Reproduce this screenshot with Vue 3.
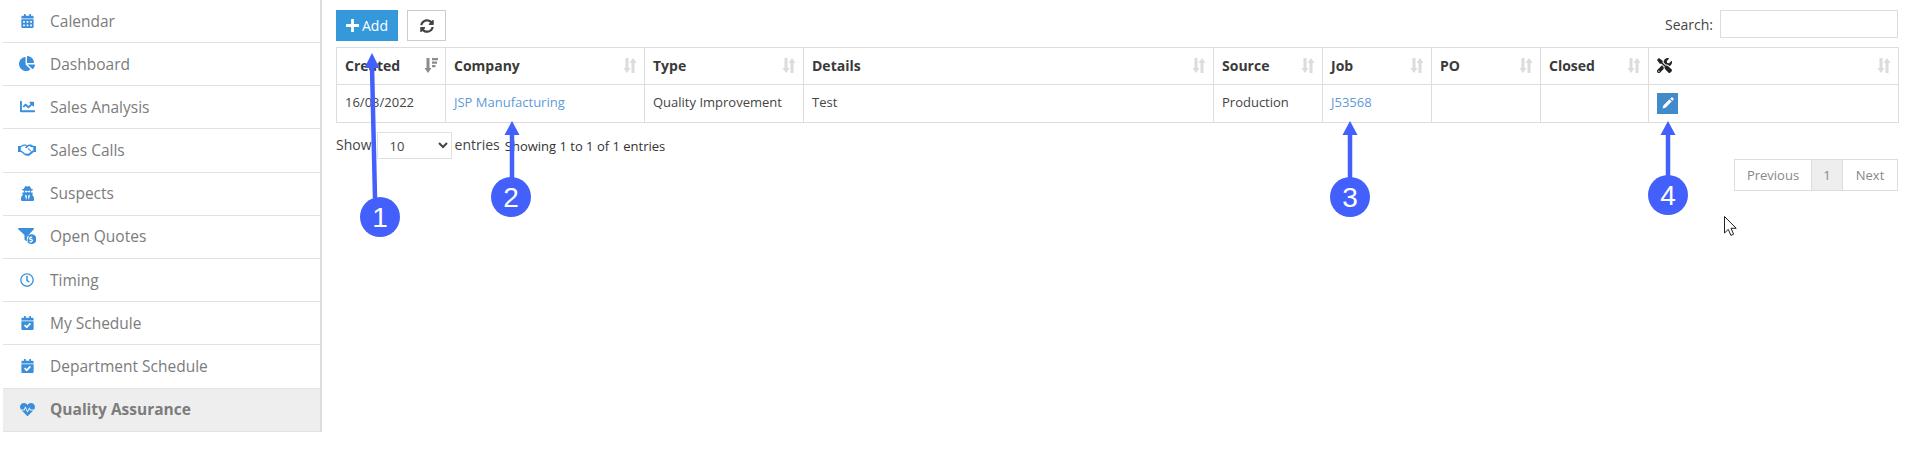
<script setup>
const p = {
  cal: 'M0 464c0 26.500 21.500 48 48 48h352c26.500 0 48-21.500 48-48V192H0v272zm320-196c0-6.600 5.400-12 12-12h40c6.600 0 12 5.400 12 12v40c0 6.600-5.400 12-12 12h-40c-6.600 0-12-5.400-12-12v-40zm0 128c0-6.600 5.400-12 12-12h40c6.600 0 12 5.400 12 12v40c0 6.600-5.400 12-12 12h-40c-6.600 0-12-5.400-12-12v-40zM192 268c0-6.600 5.400-12 12-12h40c6.600 0 12 5.400 12 12v40c0 6.600-5.400 12-12 12h-40c-6.600 0-12-5.400-12-12v-40zm0 128c0-6.600 5.400-12 12-12h40c6.600 0 12 5.400 12 12v40c0 6.600-5.400 12-12 12h-40c-6.600 0-12-5.400-12-12v-40zM64 268c0-6.600 5.400-12 12-12h40c6.600 0 12 5.400 12 12v40c0 6.600-5.400 12-12 12H76c-6.600 0-12-5.400-12-12v-40zm0 128c0-6.600 5.400-12 12-12h40c6.600 0 12 5.400 12 12v40c0 6.600-5.400 12-12 12H76c-6.600 0-12-5.400-12-12v-40zM400 64h-48V16c0-8.800-7.200-16-16-16h-32c-8.800 0-16 7.200-16 16v48H160V16c0-8.800-7.200-16-16-16h-32c-8.800 0-16 7.200-16 16v48H48C21.500 64 0 85.500 0 112v48h448v-48c0-26.500-21.500-48-48-48z',
  pie: 'M527.790 288H290.500l158.030 158.030c6.040 6.040 15.980 6.530 22.190.68 38.700-36.460 65.320-85.610 73.130-140.860 1.340-9.460-6.510-17.850-16.060-17.850zm-15.830-64.800C503.720 103.740 408.260 8.280 288.800.04 279.680-.59 272 7.100 272 16.240V240h223.770c9.140 0 16.820-7.680 16.190-16.800zM224 288V50.710c0-9.550-8.390-17.400-17.840-16.060C86.990 51.490-4.100 155.600.14 280.370 4.500 408.510 114.830 513.590 243.030 511.980c50.400-.63 96.970-16.870 135.260-44.030 7.900-5.600 8.420-17.230 1.570-24.080L224 288z',
  line: 'M496 384H64V80c0-8.840-7.160-16-16-16H16C7.160 64 0 71.160 0 80v336c0 17.670 14.330 32 32 32h464c8.840 0 16-7.160 16-16v-32c0-8.840-7.160-16-16-16zM464 96H345.940c-21.380 0-32.090 25.850-16.970 40.970l32.400 32.400L288 242.750l-73.370-73.370c-12.500-12.500-32.760-12.500-45.250 0l-68.690 68.690c-6.250 6.250-6.250 16.380 0 22.630l22.620 22.620c6.250 6.250 16.380 6.250 22.630 0L192 237.250l73.370 73.370c12.500 12.500 32.760 12.500 45.250 0l96-96 32.400 32.400c15.120 15.120 40.970 4.410 40.970-16.970V112c.01-8.840-7.150-16-15.990-16z',
  secret: 'M383.900 308.300l23.900-62.600c4-10.500-3.700-21.700-15-21.700h-58.500c11-18.900 17.800-40.600 17.800-64v-.3c39.200-7.800 64-19.100 64-31.700 0-13.300-27.300-25.100-70.100-33-9.200-32.800-27-65.800-40.600-82.800-9.500-11.900-25.900-15.600-39.500-8.800l-27.600 13.800c-9 4.500-19.600 4.500-28.600 0L182.100 3.400c-13.600-6.800-30-3.100-39.500 8.800-13.500 17-31.400 50-40.600 82.800-42.700 7.900-70 19.700-70 33 0 12.600 24.800 23.900 64 31.700v.3c0 23.400 6.800 45.100 17.800 64H56.300c-11.500 0-19.200 11.700-14.700 22.300l25.800 60.200C27.300 329.800 0 372.700 0 422.400v44.800C0 491.900 20.100 512 44.800 512h358.400c24.700 0 44.800-20.100 44.800-44.800v-44.800c0-48.400-25.800-90.400-64.100-114.100zM176 480l-41.600-192 49.600 32 24 40-32 120zm96 0l-32-120 24-40 49.600-32L272 480zm41.700-298.500c-3.900 11.900-7 24.600-16.500 33.400-10.100 9.300-48 22.400-64-25-2.800-8.400-15.400-8.400-18.300 0-17 50.200-56 32.400-64 25-9.500-8.800-12.700-21.500-16.500-33.400-.8-2.500-6.300-5.700-6.300-5.800v-10.800c28.300 3.600 61 5.800 96 5.800s67.700-2.200 96-5.800v10.800c-.1.100-5.600 3.200-6.400 5.800z',
  clock: 'M256 8C119 8 8 119 8 256s111 248 248 248 248-111 248-248S393 8 256 8zm0 448c-110.500 0-200-89.500-200-200S145.500 56 256 56s200 89.500 200 200-89.500 200-200 200zm61.800-104.400l-84.900-61.700c-3.100-2.300-4.900-5.900-4.900-9.700V116c0-6.600 5.400-12 12-12h32c6.600 0 12 5.400 12 12v141.700l66.800 48.600c5.400 3.900 6.500 11.400 2.600 16.800L334.600 349c-3.900 5.300-11.400 6.500-16.800 2.600z',
  check: 'M436 160H12c-6.600 0-12-5.400-12-12v-36c0-26.500 21.500-48 48-48h48V12c0-6.600 5.400-12 12-12h40c6.600 0 12 5.400 12 12v52h128V12c0-6.600 5.400-12 12-12h40c6.600 0 12 5.400 12 12v52h48c26.500 0 48 21.500 48 48v36c0 6.600-5.400 12-12 12zM12 192h424c6.600 0 12 5.400 12 12v260c0 26.500-21.500 48-48 48H48c-26.500 0-48-21.500-48-48V204c0-6.600 5.400-12 12-12zm333.300 95.900l-28.200-28.400c-4.700-4.700-12.300-4.700-17-.1L194.500 364.200l-45.900-46.300c-4.700-4.700-12.300-4.700-17-.1l-28.400 28.200c-4.700 4.700-4.700 12.300-.1 17l82.600 83.300c4.700 4.700 12.300 4.700 17 .1l142-140.900c4.600-4.600 4.700-12.200 0-17z',
  heart: 'M320.200 243.800l-49.700 99.400c-6 12.100-23.400 11.700-28.900-.6l-56.900-126.300-30 71.700H60.600l182.500 186.500c7.100 7.300 18.600 7.300 25.700 0L451.400 288H342.300l-22.100-44.200zM473.700 73.900l-2.400-2.500c-51.500-52.600-135.800-52.600-187.400 0L256 100l-27.900-28.500c-51.500-52.700-135.900-52.700-187.400 0l-2.400 2.400C-10.400 123.700-12.500 203 31 256h102.400l35.900-86.200c5.400-12.900 23.600-13.200 29.400-.4l58.200 129.300 49-97.900c5.900-11.800 22.700-11.800 28.600 0l27.600 55.200H481c43.500-53 41.400-132.300-7.300-182.100z',
  shake: 'M0 3h2.500l3-1.500h2.200L9 2.500 10.800 1.500h2l3 1.500H18v6h-2.200l-4.300 3.500c-1 .7-2 .5-2.600 0-.9.3-1.700 0-2.200-.6L3 9H0zM2.800 4.300V7.800h.9L7 10.500c.5.400.9.500 1.300.2l.5-.4c.7.7 1.500.7 2 .2l3.700-3h.8V4.300h-1.600L11.200 3h-.3L8.600 5.300 7 4.700 8 3.200l-.6-.4H5.900zM9.400 5.800l4 3.300.6-.7L10.500 5.300z',
  funnel: 'M.7 0h14.600c.6 0 .9.7.5 1.200L10.500 7v2.300A5.800 5.800 0 0 0 9.900 14L6.500 11.800V7L.2 1.200C-.2.700.1 0 .7 0zM13 6.300a4.900 4.900 0 1 1 0 9.700 4.900 4.900 0 0 1 0-9.700zm.5 1.900h-1v.9c-1 .2-1.500.8-1.500 1.500 0 .8.600 1.200 1.500 1.400l.7.2c.4.100.6.200.6.500s-.3.400-.7.400c-.5 0-.9-.1-1.400-.4l-.5.800c.4.300.8.500 1.300.5v.9h1v-.9c.9-.2 1.500-.8 1.500-1.500 0-.9-.6-1.300-1.500-1.500l-.7-.2c-.4-.1-.5-.2-.5-.4s.2-.4.6-.4.800.1 1.200.3l.4-.8c-.4-.2-.7-.4-1-.4z',
  tools: 'M501.100 395.700L384 278.600c-23.100-23.100-57.600-27.600-85.400-13.900L192 158.100V96L64 0 0 64l96 128h62.100l106.600 106.600c-13.600 27.800-9.200 62.300 13.900 85.400l117.100 117.100c14.600 14.600 38.200 14.600 52.700 0l52.700-52.700c14.500-14.600 14.500-38.200 0-52.700zM331.700 225c28.300 0 54.900 11 74.900 31l19.400 19.400c15.800-6.900 30.800-16.500 43.800-29.500 37.100-37.100 49.700-89.300 37.900-136.700-2.200-9-13.500-12.100-20.100-5.500l-74.400 74.400-67.900-11.300L334 98.900l74.400-74.400c6.600-6.600 3.400-17.900-5.700-20.200-47.400-11.700-99.600.9-136.600 37.900-28.500 28.500-41.900 66.100-41.200 103.600l82.100 82.100c8.100-1.900 16.500-2.900 24.700-2.900zm-103.900 82l-56.700-56.700L18.700 402.800c-25 25-25 65.500 0 90.500s65.500 25 90.500 0l123.600-123.600c-7.600-19.900-9.900-41.600-5-62.700zM64 472c-13.200 0-24-10.800-24-24 0-13.300 10.700-24 24-24s24 10.700 24 24c0 13.200-10.700 24-24 24z',
  pencil: 'M396 24c14-14 36-14 50 0l42 42c14 14 14 36 0 50l-46 46-92-92zM322 98l92 92L150 454 24 488l34-126z',
  sync: 'M370.720 133.280C339.458 104.008 298.888 87.962 255.848 88c-77.458.068-144.328 53.178-162.791 126.850-1.344 5.363-6.122 9.150-11.651 9.150H24.103c-7.498 0-13.194-6.807-11.807-14.176C33.933 94.924 134.813 8 256 8c66.448 0 126.791 26.136 171.315 68.685L463.030 40.970C478.149 25.851 504 36.559 504 57.941V192c0 13.255-10.745 24-24 24H345.941c-21.382 0-32.090-25.851-16.970-40.971l41.749-41.749zM32 296h134.059c21.382 0 32.090 25.851 16.971 40.971l-41.750 41.750c31.262 29.273 71.835 45.319 114.876 45.280 77.418-.070 144.315-53.144 162.787-126.849 1.344-5.363 6.122-9.150 11.651-9.150h57.304c7.498 0 13.193 6.807 11.807 14.176C478.067 417.076 377.187 504 256 504c-66.448 0-126.791-26.136-171.315-68.685L48.970 471.030C33.851 486.149 8 475.441 8 454.059V320c0-13.255 10.745-24 24-24z'
}

const menu = [
  { label: 'Calendar', d: p.cal, vb: '0 0 448 512', w: 13, h: 14 },
  { label: 'Dashboard', d: p.pie, vb: '0 0 544 512', w: 16, h: 15 },
  { label: 'Sales Analysis', d: p.line, vb: '0 0 512 512', w: 15, h: 15 },
  { label: 'Sales Calls', d: p.shake, vb: '0 1 18 12.500', w: 18, h: 12.5 },
  { label: 'Suspects', d: p.secret, vb: '0 0 448 512', w: 13, h: 15 },
  { label: 'Open Quotes', d: p.funnel, vb: '0 0 18 16', w: 18, h: 16 },
  { label: 'Timing', d: p.clock, vb: '0 0 512 512', w: 14, h: 14 },
  { label: 'My Schedule', d: p.check, vb: '0 0 448 512', w: 13, h: 14 },
  { label: 'Department Schedule', d: p.check, vb: '0 0 448 512', w: 13, h: 14 },
  { label: 'Quality Assurance', d: p.heart, vb: '0 0 512 512', w: 15, h: 15, active: true }
]

const columns = [
  { label: 'Created', w: 109, active: true },
  { label: 'Company', w: 199 },
  { label: 'Type', w: 159 },
  { label: 'Details', w: 410 },
  { label: 'Source', w: 109 },
  { label: 'Job', w: 109 },
  { label: 'PO', w: 109 },
  { label: 'Closed', w: 108 },
  { label: '', w: 250, tools: true }
]

const arrows = [
  { n: 1, cx: 380, cy: 217, x: 375, tip: 372, ty: 53, base: 68, end: 198 },
  { n: 2, cx: 511, cy: 197, x: 512, tip: 512, ty: 121, base: 135, end: 178 },
  { n: 3, cx: 1350, cy: 197, x: 1350, tip: 1350, ty: 121, base: 135, end: 178 },
  { n: 4, cx: 1668, cy: 195, x: 1668, tip: 1668, ty: 121, base: 135, end: 176 }
]
</script>

<template>
  <div class="page">
    <nav class="side">
      <a
        v-for="m in menu"
        :key="m.label"
        class="item"
        :class="{ active: m.active }"
      >
        <span class="ico">
          <svg :viewBox="m.vb" :width="m.w" :height="m.h" fill="#3a8fdc" fill-rule="evenodd">
            <path :d="m.d" />
          </svg>
        </span>
        <span>{{ m.label }}</span>
      </a>
    </nav>

    <main class="main">
      <div class="toolbar">
        <button class="btn add">
          <svg viewBox="0 0 14 14" width="13" height="13" fill="#fff">
            <path d="M5.500 0h3v5.500H14v3H8.500V14h-3V8.500H0v-3h5.500z" />
          </svg>
          <span>Add</span>
        </button>
        <button class="btn refresh">
          <svg viewBox="0 0 512 512" width="14" height="14" fill="#444"><path :d="p.sync" /></svg>
        </button>
        <label class="search">
          <span>Search:</span>
          <input type="text" />
        </label>
      </div>

      <table class="grid">
        <colgroup>
          <col v-for="c in columns" :key="c.label" :style="{ width: c.w + 'px' }" />
        </colgroup>
        <thead>
          <tr>
            <th v-for="c in columns" :key="c.label">
              <div class="th">
                <svg v-if="c.tools" viewBox="0 0 512 512" width="15" height="15" fill="#222"><path :d="p.tools" /></svg>
                <span v-else>{{ c.label }}</span>
                <svg v-if="c.active" class="sort" viewBox="0 0 14 15" width="14" height="15" fill="#8c8c8c">
                  <path d="M2.500 0h3v10h2L4 15 .5 10h2zM8 0h6v2.200H8zM8 3.500h5v2.200H8zM8 7h3.500v2.200H8z" />
                </svg>
                <svg v-else class="sort" viewBox="0 0 14 15" width="14" height="15" fill="#dcdcdc">
                  <path d="M2.500 0h3v10h2L4 15 .5 10h2zM10 0l3.500 5h-2v10h-3V5h-2z" />
                </svg>
              </div>
            </th>
          </tr>
        </thead>
        <tbody>
          <tr>
            <td>16/03/2022</td>
            <td><a class="link">JSP Manufacturing</a></td>
            <td>Quality Improvement</td>
            <td>Test</td>
            <td>Production</td>
            <td><a class="link">J53568</a></td>
            <td></td>
            <td></td>
            <td class="action">
              <span class="edit">
                <svg viewBox="0 0 512 512" width="12" height="12" fill="#fff"><path :d="p.pencil" /></svg>
              </span>
            </td>
          </tr>
        </tbody>
      </table>

      <div class="footer">
        <span class="show">Show</span>
        <select class="size"><option>10</option></select>
        <span class="entries">entries</span>
        <span class="info">Showing 1 to 1 of 1 entries</span>
      </div>

      <div class="pager">
        <a class="pg prev">Previous</a>
        <a class="pg current">1</a>
        <a class="pg next">Next</a>
      </div>
    </main>

    <svg class="overlay" width="1917" height="449" viewBox="0 0 1917 449">
      <g v-for="a in arrows" :key="a.n">
        <line :x1="a.x" :y1="a.end" :x2="a.tip" :y2="a.base - 2" stroke="#4360fc" stroke-width="4.500" />
        <path :d="`M${a.tip} ${a.ty}L${a.tip + 7.500} ${a.base}H${a.tip - 7.500}Z`" fill="#4360fc" />
        <circle :cx="a.cx" :cy="a.cy" r="20" fill="#4360fc" />
        <text :x="a.cx" :y="a.cy + 10" class="num">{{ a.n }}</text>
      </g>
      <path d="M1724.500 216.500v16.500l3.800-3.600 2.600 6 2.700-1.200-2.600-5.900h5.200z" fill="#fff" stroke="#222" stroke-width="1" />
    </svg>
  </div>
</template>

<style>
html, body { margin: 0; background: #fff; }
</style>

<style scoped>
.page {
  position: relative;
  width: 1917px;
  height: 449px;
  overflow: hidden;
  display: flex;
  align-items: flex-start;
  font-family: "Open Sans", sans-serif;
  font-size: 13px;
  color: #333;
  background: #fff;
}
.side {
  box-sizing: border-box;
  width: 319px;
  margin-left: 3px;
  flex: none;
  border-right: 2px solid #ddd;
  display: flex;
  flex-direction: column;
}
.item {
  box-sizing: border-box;
  height: 43.2px;
  display: flex;
  align-items: center;
  gap: 13px;
  padding: 0 0 1px 14px;
  border-bottom: 1.5px solid #e2e2e2;
  font-size: 15.5px;
  color: #7c7c7c;
}
.item:first-child { height: 43px; }
.item.active {
  background: #eee;
  font-weight: 700;
  color: #7c7c7c;
}
.ico {
  width: 20px;
  display: flex;
  justify-content: center;
  flex: none;
}
.main {
  flex: 1;
  min-width: 0;
  padding: 10px 19px 0 14px;
  display: flex;
  flex-direction: column;
}
.toolbar {
  display: flex;
  align-items: flex-start;
  gap: 9px;
  height: 37px;
}
.btn {
  box-sizing: border-box;
  height: 31px;
  padding: 0;
  font-family: inherit;
  font-size: 14px;
  display: inline-flex;
  align-items: center;
  justify-content: center;
}
.add {
  width: 62px;
  gap: 3px;
  border: none;
  background: #3498db;
  color: #fff;
}
.refresh {
  width: 39px;
  background: #fff;
  border: 1px solid #ccc;
}
.search {
  margin-left: auto;
  display: flex;
  align-items: center;
  gap: 7px;
  font-size: 14px;
  color: #444;
}
.search input {
  box-sizing: border-box;
  width: 178px;
  height: 28px;
  border: 1px solid #ddd;
  outline: none;
  background: #fff;
}
.grid {
  table-layout: fixed;
  width: 1562px;
  border-collapse: collapse;
  font-size: 13px;
}
.grid th,
.grid td {
  box-sizing: border-box;
  border: 1px solid #ddd;
  padding: 0 8px;
  text-align: left;
}
.grid th { height: 37px; padding-bottom: 2px; font-size: 14px; font-weight: 700; color: #3a3a3a; }
.grid td { height: 38px; padding-bottom: 4px; color: #444; }
.th {
  display: flex;
  align-items: center;
  justify-content: space-between;
}
.sort { flex: none; margin-right: -1px; }
.link { color: #5d9bd8; }
.grid .action { padding-bottom: 1px; }
.edit {
  width: 21px;
  height: 21px;
  background: #428bca;
  display: flex;
  align-items: center;
  justify-content: center;
}
.footer {
  display: flex;
  align-items: center;
  height: 27px;
  margin-top: 9px;
  font-size: 14px;
  color: #444;
}
.size {
  box-sizing: border-box;
  width: 75px;
  height: 27px;
  margin: 0 3px 0 5px;
  padding-left: 8px;
  border: 1px solid #e0e0e0;
  background: #fff;
  color: #444;
  font-family: inherit;
  font-size: 13px;
}
.show, .entries { position: relative; top: -1px; }
.info { margin-left: 5px; font-size: 13px; color: #333; }
.pager {
  display: flex;
  align-self: flex-end;
  height: 32px;
  box-sizing: border-box;
  border: 1px solid #ddd;
  font-size: 13px;
  color: #888;
}
.pg {
  box-sizing: border-box;
  display: flex;
  align-items: center;
  justify-content: center;
}
.prev { width: 76px; }
.next { width: 54px; }
.pg.current {
  width: 32px;
  background: #eee;
  border-left: 1px solid #ddd;
  border-right: 1px solid #ddd;
}
.overlay {
  position: absolute;
  left: 0;
  top: 0;
  pointer-events: none;
}
.num {
  font-family: "Liberation Sans", sans-serif;
  font-size: 28px;
  fill: #fff;
  text-anchor: middle;
}
</style>
